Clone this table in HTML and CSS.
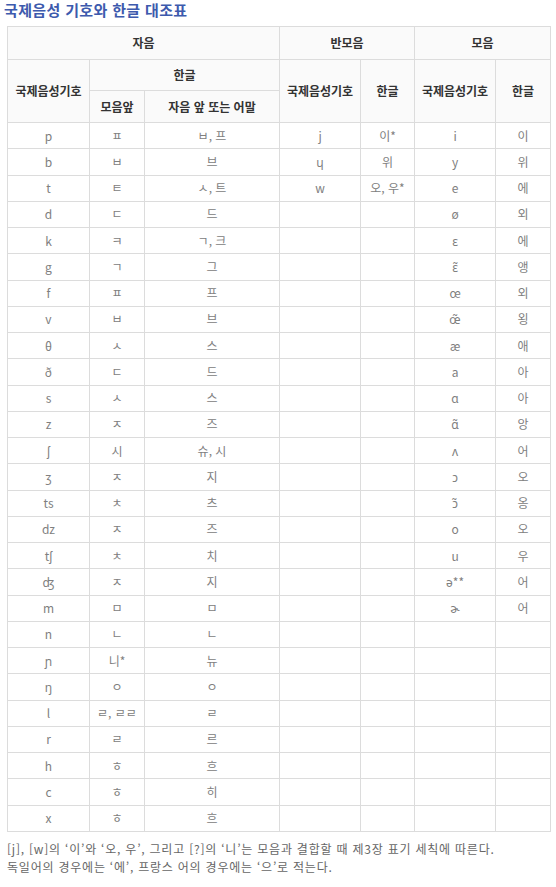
FILE: index.html
```html
<!DOCTYPE html>
<html lang="ko">
<head>
<meta charset="utf-8">
<link rel="stylesheet" href="styles.css">
</head>
<body>
<div class="page">
<h3 class="title">국제음성 기호와 한글 대조표</h3>
<table class="chart">
<colgroup>
<col class="c1"><col class="c2"><col class="c3"><col class="c4"><col class="c5"><col class="c6"><col class="c7">
</colgroup>
<thead>
<tr class="h1"><th colspan="3">자음</th><th colspan="2">반모음</th><th colspan="2">모음</th></tr>
<tr class="h2"><th rowspan="2">국제음성기호</th><th colspan="2">한글</th><th rowspan="2">국제음성기호</th><th rowspan="2">한글</th><th rowspan="2">국제음성기호</th><th rowspan="2">한글</th></tr>
<tr class="h3"><th>모음앞</th><th>자음 앞 또는 어말</th></tr>
</thead>
<tbody>
<tr><td>p</td><td>ㅍ</td><td>ㅂ, 프</td><td>j</td><td>이*</td><td>i</td><td>이</td></tr>
<tr><td>b</td><td>ㅂ</td><td>브</td><td>ɥ</td><td>위</td><td>y</td><td>위</td></tr>
<tr><td>t</td><td>ㅌ</td><td>ㅅ, 트</td><td>w</td><td>오, 우*</td><td>e</td><td>에</td></tr>
<tr><td>d</td><td>ㄷ</td><td>드</td><td></td><td></td><td>ø</td><td>외</td></tr>
<tr><td>k</td><td>ㅋ</td><td>ㄱ, 크</td><td></td><td></td><td>ɛ</td><td>에</td></tr>
<tr><td>g</td><td>ㄱ</td><td>그</td><td></td><td></td><td>ɛ̃</td><td>앵</td></tr>
<tr><td>f</td><td>ㅍ</td><td>프</td><td></td><td></td><td>œ</td><td>외</td></tr>
<tr><td>v</td><td>ㅂ</td><td>브</td><td></td><td></td><td>œ̃</td><td>욍</td></tr>
<tr><td>θ</td><td>ㅅ</td><td>스</td><td></td><td></td><td>æ</td><td>애</td></tr>
<tr><td>ð</td><td>ㄷ</td><td>드</td><td></td><td></td><td>a</td><td>아</td></tr>
<tr><td>s</td><td>ㅅ</td><td>스</td><td></td><td></td><td>ɑ</td><td>아</td></tr>
<tr><td>z</td><td>ㅈ</td><td>즈</td><td></td><td></td><td>ɑ̃</td><td>앙</td></tr>
<tr><td>ʃ</td><td>시</td><td>슈, 시</td><td></td><td></td><td>ʌ</td><td>어</td></tr>
<tr><td>ʒ</td><td>ㅈ</td><td>지</td><td></td><td></td><td>ɔ</td><td>오</td></tr>
<tr><td>ts</td><td>ㅊ</td><td>츠</td><td></td><td></td><td>ɔ̃</td><td>옹</td></tr>
<tr><td>dz</td><td>ㅈ</td><td>즈</td><td></td><td></td><td>o</td><td>오</td></tr>
<tr><td>tʃ</td><td>ㅊ</td><td>치</td><td></td><td></td><td>u</td><td>우</td></tr>
<tr><td>ʤ</td><td>ㅈ</td><td>지</td><td></td><td></td><td>ə**</td><td>어</td></tr>
<tr><td>m</td><td>ㅁ</td><td>ㅁ</td><td></td><td></td><td>ɚ</td><td>어</td></tr>
<tr><td>n</td><td>ㄴ</td><td>ㄴ</td><td></td><td></td><td></td><td></td></tr>
<tr><td>ɲ</td><td>니*</td><td>뉴</td><td></td><td></td><td></td><td></td></tr>
<tr><td>ŋ</td><td>ㅇ</td><td>ㅇ</td><td></td><td></td><td></td><td></td></tr>
<tr><td>l</td><td>ㄹ, ㄹㄹ</td><td>ㄹ</td><td></td><td></td><td></td><td></td></tr>
<tr><td>r</td><td>ㄹ</td><td>르</td><td></td><td></td><td></td><td></td></tr>
<tr><td>h</td><td>ㅎ</td><td>흐</td><td></td><td></td><td></td><td></td></tr>
<tr><td>c</td><td>ㅎ</td><td>히</td><td></td><td></td><td></td><td></td></tr>
<tr><td>x</td><td>ㅎ</td><td>흐</td><td></td><td></td><td></td><td></td></tr>
</tbody>
</table>
<p class="note">[j], [w]의 ‘이’와 ‘오, 우’, 그리고 [?]의 ‘니’는 모음과 결합할 때 제3장 표기 세칙에 따른다.<br>독일어의 경우에는 ‘에’, 프랑스 어의 경우에는 ‘으’로 적는다.</p>
</div>
</body>
</html>
```
FILE: styles.css
```css
html, body {
  margin: 0;
  padding: 0;
  background: #fff;
}
body {
  font-family: "Noto Sans CJK KR", "Noto Sans", "DejaVu Sans", sans-serif;
}
.page {
  padding: 0;
}
.title {
  margin: 0;
  padding: 1px 0 0 4px;
  height: 26px;
  box-sizing: border-box;
  font-size: 15px;
  line-height: 18px;
  font-weight: bold;
  color: #3d5aad;
  letter-spacing: 0.35px;
}
.chart {
  margin-left: 7px;
  width: 543px;
  border-collapse: collapse;
  table-layout: fixed;
  font-size: 12px;
}
.c1 { width: 82px; }
.c2 { width: 55px; }
.c3 { width: 135px; }
.c4 { width: 81px; }
.c5 { width: 54px; }
.c6 { width: 81px; }
.c7 { width: 55px; }
.chart th, .chart td {
  border: 1px solid #dcdcdc;
  padding: 0;
  text-align: center;
  vertical-align: middle;
}
.chart th {
  background: #fafafa;
  color: #333;
  font-weight: bold;
  font-size: 12px;
  line-height: 16px;
}
.h1 th { height: 32px; }
.h2 th { height: 30px; }
.h3 th { height: 31px; }
.chart td {
  color: #808080;
  height: 25.25px;
  line-height: 16px;
  font-size: 12px;
}
.note {
  margin: 8px 0 0 7px;
  font-size: 12px;
  line-height: 18px;
  color: #666;
  letter-spacing: 0.78px;
  white-space: nowrap;
}
```
